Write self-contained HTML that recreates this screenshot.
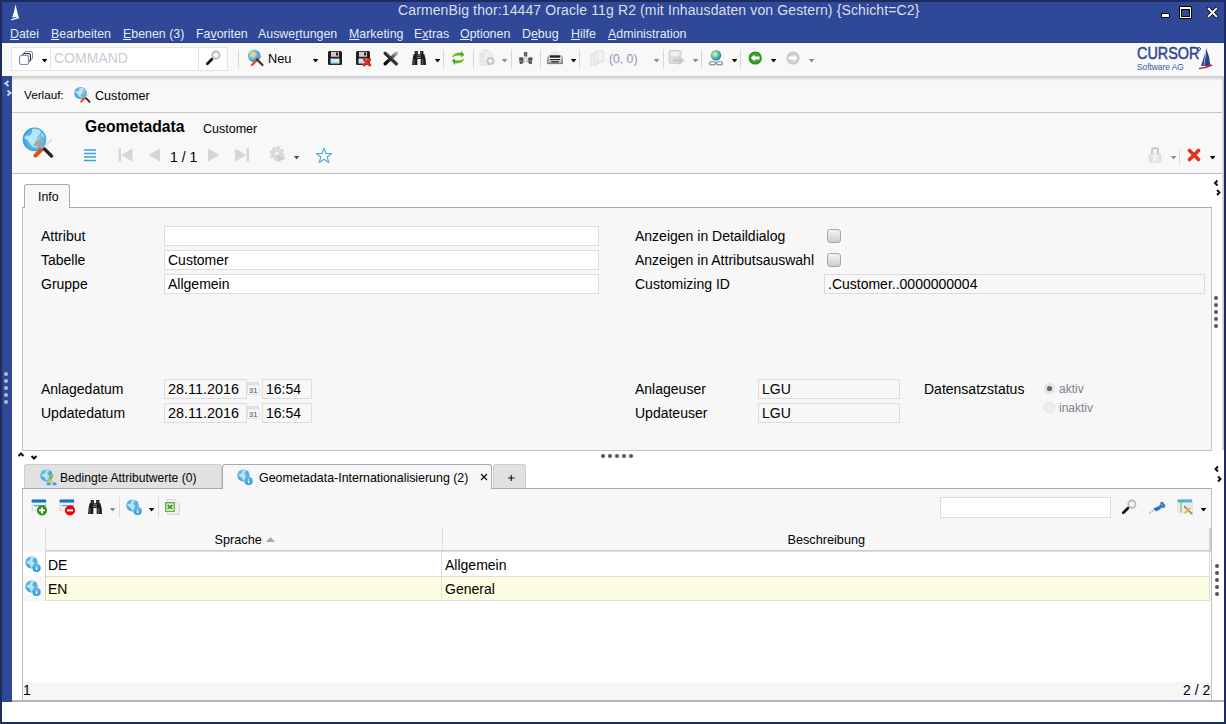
<!DOCTYPE html>
<html><head><meta charset="utf-8">
<style>
html,body{margin:0;padding:0;}
body{width:1226px;height:724px;overflow:hidden;position:relative;background:#1f2b5e;font-family:"Liberation Sans",sans-serif;color:#000;}
.a{position:absolute;}
.t{position:absolute;white-space:nowrap;line-height:16px;font-size:14px;}
.menu{position:absolute;top:27px;font-size:12.4px;line-height:14px;color:#e6eaf3;white-space:nowrap;}
.menu u{text-decoration:underline;text-underline-offset:1px;text-decoration-thickness:1px;}
.sep{position:absolute;top:47px;width:1px;height:24px;background:linear-gradient(rgba(215,215,215,0),#d6d6d6 25%,#d6d6d6 75%,rgba(215,215,215,0));}
.arr{position:absolute;width:6px;height:3.6px;background:#000;clip-path:polygon(0 0,100% 0,50% 100%);transform:translate(-0.4px,-0.2px);}
.arr.g{background:#8a8a8a;}
.fld{position:absolute;box-sizing:border-box;border:1px solid #dcdcdc;background:#fff;height:20px;}
.fld.ro{background:#f7f7f7;}
.lbl{position:absolute;white-space:nowrap;font-size:14px;line-height:16px;}
.dot{position:absolute;width:4px;height:4px;border-radius:50%;background:#555;}
.ldot{position:absolute;width:4px;height:4px;border-radius:50%;background:#b4bcd8;}
.cb{position:absolute;box-sizing:border-box;width:14px;height:14px;border:1px solid #a9a9a9;border-radius:3px;background:linear-gradient(#f4f4f4,#cdcdcd);}
</style></head><body>

<svg width="0" height="0" style="position:absolute">
<defs>
<radialGradient id="globeG" cx="0.45" cy="0.45" r="0.6"><stop offset="0" stop-color="#8fd2f0"/><stop offset="0.7" stop-color="#44a7de"/><stop offset="1" stop-color="#2a8ccc"/></radialGradient>
<radialGradient id="infoG" cx="0.5" cy="0.35" r="0.65"><stop offset="0" stop-color="#6cc2ec"/><stop offset="1" stop-color="#2592d4"/></radialGradient>
<symbol id="globeInfo" viewBox="0 0 18 18">
<circle cx="6.5" cy="6.5" r="6.1" fill="url(#globeG)"/>
<path d="M5.5 1.2 Q8 0.8 9.5 2 Q8.5 3.5 7.2 3.6 Q6.8 5 8 6 Q9.5 6.5 9 8.5 Q8 10.5 6.5 12.2 Q5 11 5.2 9.3 Q4.6 8 3 7.5 Q1.5 7.4 1.2 6 Q2.5 4.5 4 5 Q5.5 4 5.5 1.2Z" fill="#c8ecfa" opacity="0.8"/>
<path d="M10.5 4 Q12 5 12 7 Q11 6.5 10.5 4Z" fill="#c8ecfa" opacity="0.6"/>
<circle cx="11.6" cy="12" r="4.4" fill="#f4fbff" opacity="0.5"/>
<circle cx="11.6" cy="12" r="4.1" fill="url(#infoG)"/>
<rect x="11" y="11.8" width="1.2" height="2.4" fill="#fff"/><rect x="11" y="10.3" width="1.2" height="0.9" fill="#fff" opacity="0.8"/>
</symbol>
<symbol id="binoc" viewBox="0 0 16 15">
<linearGradient id="binG" x1="0" y1="0" x2="1" y2="0"><stop offset="0" stop-color="#111"/><stop offset="0.35" stop-color="#555"/><stop offset="0.6" stop-color="#222"/><stop offset="1" stop-color="#111"/></linearGradient>
<rect x="2.6" y="0" width="3.3" height="4" fill="#1a1a1a"/><rect x="8.1" y="0" width="3.3" height="4" fill="#1a1a1a"/>
<rect x="3.6" y="0.3" width="1" height="3" fill="#555"/><rect x="9.1" y="0.3" width="1" height="3" fill="#555"/>
<path d="M1.6 3.2 H12.4 L13.6 8 H0.6Z" fill="#1c1c1c"/>
<rect x="5" y="4" width="4" height="1" fill="#666"/><rect x="5" y="5.8" width="4" height="1.2" fill="#888"/>
<path d="M0.6 8 H5.3 V14 H0 Z" fill="url(#binG)"/><path d="M8.7 8 H13.6 L14 14 H8.7Z" fill="url(#binG)"/>
</symbol>
<symbol id="xls" viewBox="0 0 16 16">
<path d="M2.2 0.5 H10.5 L14.4 4.4 V15.4 H2.2Z" fill="#f0f0f0" stroke="#cfcfcf" stroke-width="0.8"/>
<path d="M10.5 0.5 V4.4 H14.4" fill="#fafafa" stroke="#d8d8d8" stroke-width="0.6"/>
<rect x="0" y="3" width="10" height="10" rx="0.8" fill="#6aac4a"/>
<rect x="1.4" y="4.4" width="7.2" height="7.2" fill="#eef6e8"/>
<path d="M2.6 6 L7.4 10 M7.4 6 L2.6 10" stroke="#3f9d28" stroke-width="1.8"/>
<rect x="1.6" y="10.4" width="6.8" height="0.8" fill="#fff"/>
</symbol>
<symbol id="mag" viewBox="0 0 18 18">
<radialGradient id="magG" cx="0.5" cy="0.55" r="0.5"><stop offset="0" stop-color="#ffffff"/><stop offset="0.7" stop-color="#e6e8ee"/><stop offset="1" stop-color="#c9cdd8"/></radialGradient>
<circle cx="11.9" cy="5.1" r="3.8" fill="url(#magG)" stroke="#b4b4b4" stroke-width="1.5"/>
<path d="M9.4 7.6 L8 9" stroke="#b8b8b8" stroke-width="1.6"/>
<path d="M7.8 9.2 L3.3 13.7" stroke="#111" stroke-width="2.7" stroke-linecap="round"/>
</symbol>
<symbol id="geoTools" viewBox="0 0 36 36"><defs><radialGradient id="gH" cx="0.55" cy="0.5" r="0.6"><stop offset="0" stop-color="#9fd8f2"/><stop offset="0.75" stop-color="#49aadf"/><stop offset="1" stop-color="#2f90cf"/></radialGradient></defs><circle cx="14.5" cy="15.4" r="11.8" fill="url(#gH)"/><path d="M12 5 Q16 4 20 6 Q22 9 19 11 Q17 12 16 15 Q14 19 17 21 Q19 23 15 24 Q11 22 9 18 Q7 15 4 14 Q6 10 9 12 Q12 11 12 7Z" fill="#c4ebfa" opacity="0.85"/><path d="M22 9 Q25 11 24 14 Q22 13 21 11Z" fill="#c4ebfa" opacity="0.7"/><path d="M31.5 15.5 L23 25" stroke="#d8d8d8" stroke-width="1.6" stroke-linecap="round"/><path d="M15.5 31.5 L22 25" stroke="#e5500f" stroke-width="4" stroke-linecap="round"/><path d="M24.5 25 L31.5 32" stroke="#252525" stroke-width="3.4" stroke-linecap="round"/><path d="M13.5 21 Q15 17 19 16 Q23 15.5 25 16 Q21 17.5 20.5 19 L23.5 23.5 L21.5 25 L18 21 Q16 21.5 15 23Z" fill="#a4a4a4"/></symbol>
</defs></svg>
<!-- title + menu bar -->
<div class="a" style="left:2px;top:2px;width:1222px;height:41px;background:#2f4898;"></div>
<div class="a" style="left:2px;top:42px;width:1222px;height:1px;background:#27408c;"></div>
<svg class="a" style="left:10px;top:4px" width="10" height="17" viewBox="0 0 10 17"><path d="M5.5 0.5 L8.5 13 L3 13 Z" fill="#fff"/><path d="M4 8 L2 13.5 L4.5 13.5Z" fill="#e8eaf4"/><path d="M1 16 Q5 14.5 9 13.5" stroke="#fff" stroke-width="1.3" fill="none"/></svg>
<div class="t" style="left:398px;top:2px;font-size:14px;letter-spacing:0.12px;color:#dcdfe8;">CarmenBig thor:14447 Oracle 11g R2 (mit Inhausdaten von Gestern) {Schicht=C2}</div>
<!-- window buttons -->
<div class="a" style="left:1161px;top:13px;width:9px;height:5px;background:#fff;border:1px solid #000;box-sizing:border-box;border-radius:1px;"></div>
<div class="a" style="left:1179px;top:6px;width:13px;height:13px;background:#000;border-radius:1px;"></div>
<div class="a" style="left:1180px;top:7px;width:11px;height:11px;background:#fff;"></div>
<div class="a" style="left:1181px;top:9px;width:9px;height:8px;background:#000;"></div>
<div class="a" style="left:1182px;top:10px;width:7px;height:6px;background:#2f4898;"></div>
<svg class="a" style="left:1206px;top:6px" width="13" height="13" viewBox="0 0 13 13"><path d="M2.5 2.5 L10.5 10.5 M10.5 2.5 L2.5 10.5" stroke="#000" stroke-width="3.4" stroke-linecap="round"/><path d="M2.5 2.5 L10.5 10.5 M10.5 2.5 L2.5 10.5" stroke="#fff" stroke-width="1.9" stroke-linecap="round"/></svg>

<div class="menu" style="left:10px"><u>D</u>atei</div>
<div class="menu" style="left:51px"><u>B</u>earbeiten</div>
<div class="menu" style="left:123px"><u>E</u>benen (3)</div>
<div class="menu" style="left:196px">Fa<u>v</u>oriten</div>
<div class="menu" style="left:258px">Auswe<u>r</u>tungen</div>
<div class="menu" style="left:349px"><u>M</u>arketing</div>
<div class="menu" style="left:414px">E<u>x</u>tras</div>
<div class="menu" style="left:460px"><u>O</u>ptionen</div>
<div class="menu" style="left:522px">D<u>e</u>bug</div>
<div class="menu" style="left:571px"><u>H</u>ilfe</div>
<div class="menu" style="left:608px"><u>A</u>dministration</div>

<!-- toolbar -->
<div class="a" style="left:2px;top:43px;width:1222px;height:33px;background:#f8f8f8;"></div>
<div class="a" style="left:12px;top:76px;width:1212px;height:5px;background:linear-gradient(#c4c4c4,#f8f8f8);"></div>

<!-- command box -->
<div class="a" style="left:11px;top:47px;width:217px;height:24px;box-sizing:border-box;border:1px solid #e3e3e3;background:#fff;"></div>
<div class="a" style="left:50px;top:48px;width:1px;height:22px;background:#e3e3e3;"></div>
<div class="a" style="left:198px;top:48px;width:1px;height:22px;background:#e3e3e3;"></div>
<svg class="a" style="left:18px;top:50px" width="17" height="16" viewBox="0 0 17 16"><rect x="6.5" y="1.5" width="8" height="8" rx="1.5" fill="none" stroke="#6f95c4"/><rect x="4.5" y="3.5" width="8" height="8" rx="1.5" fill="#ddd" stroke="#333"/><rect x="1.5" y="5.5" width="9" height="9" rx="1.8" fill="#fff" stroke="#6f95c4" stroke-width="1.2"/></svg>
<div class="arr" style="left:42px;top:59px;"></div>
<div class="t" style="left:54px;top:50px;font-size:14px;color:#c9cbd3;">COMMAND</div>
<svg class="a" style="left:204px;top:50px" width="18" height="18" viewBox="0 0 18 18"><use href="#mag"/></svg>
<div class="sep" style="left:238px"></div>

<!-- Neu -->
<svg class="a" style="left:247px;top:49px" width="18" height="18" viewBox="0 0 18 18"><defs><radialGradient id="gN" cx="0.4" cy="0.38" r="0.62"><stop offset="0" stop-color="#f4dc70"/><stop offset="0.25" stop-color="#e8d884"/><stop offset="0.45" stop-color="#7cc6e8"/><stop offset="0.8" stop-color="#3aa0dc"/><stop offset="1" stop-color="#2a86c6"/></radialGradient></defs><circle cx="7.2" cy="7" r="6.2" fill="url(#gN)"/><path d="M5 16 L10 11" stroke="#e2521e" stroke-width="2.4" stroke-linecap="round"/><path d="M15.5 16 L9.5 10" stroke="#333" stroke-width="2.2" stroke-linecap="round"/><path d="M8 9.5 L12 7 L14 8" stroke="#999" stroke-width="1.6" fill="none"/></svg>
<div class="t" style="left:268px;top:51px;font-size:12.8px;">Neu</div>
<div class="arr" style="left:313px;top:59px;"></div>

<!-- save -->
<svg class="a" style="left:328px;top:51px" width="14" height="14" viewBox="0 0 14 14"><rect x="0" y="0" width="14" height="14" rx="1.5" fill="#1d1d1d"/><rect x="3" y="0.8" width="8" height="5" fill="#c9c9c9"/><rect x="8" y="1.5" width="2" height="3" fill="#222"/><rect x="2.5" y="7.5" width="9" height="5" fill="#e2e2e2"/><rect x="2.5" y="11.8" width="9" height="1.3" fill="#35a6dd"/></svg>
<svg class="a" style="left:356px;top:51px" width="16" height="16" viewBox="0 0 16 16"><rect x="0" y="0" width="14" height="14" rx="1.5" fill="#1d1d1d"/><rect x="3" y="0.8" width="8" height="5" fill="#c9c9c9"/><rect x="8" y="1.5" width="2" height="3" fill="#222"/><rect x="2.5" y="7.5" width="9" height="5" fill="#e2e2e2"/><rect x="2.5" y="11.8" width="9" height="1.3" fill="#35a6dd"/><path d="M8.3 8.6 L13.7 14 M13.7 8.6 L8.3 14" stroke="#e8261a" stroke-width="2.9" stroke-linecap="round"/></svg>
<svg class="a" style="left:383px;top:51px" width="16" height="15" viewBox="0 0 16 15"><defs><linearGradient id="gX" x1="0" y1="1" x2="1" y2="0"><stop offset="0" stop-color="#000"/><stop offset="0.5" stop-color="#333"/><stop offset="1" stop-color="#aaa"/></linearGradient></defs><path d="M2.2 2.2 L13.3 12.8 M13.3 2.2 L2.2 12.8" stroke="url(#gX)" stroke-width="3.3" stroke-linecap="round"/></svg>
<!-- binoculars -->
<svg class="a" style="left:412px;top:51px" width="16" height="15" viewBox="0 0 16 15"><use href="#binoc"/></svg>
<div class="arr" style="left:435px;top:59px;"></div>
<div class="sep" style="left:443px"></div>
<!-- refresh -->
<svg class="a" style="left:451px;top:50px" width="15" height="16" viewBox="0 0 15 16"><defs><linearGradient id="rfA" x1="0" y1="0" x2="1" y2="0"><stop offset="0" stop-color="#8cc424"/><stop offset="1" stop-color="#3aa52a"/></linearGradient><linearGradient id="rfB" x1="0" y1="0" x2="1" y2="0"><stop offset="0" stop-color="#34a02a"/><stop offset="1" stop-color="#92c81e"/></linearGradient></defs><path d="M1 8 Q1.5 3.2 7.5 2.8 L10.2 2.8 L10.2 0.8 L13.2 4.9 L10.2 7.4 L10.2 5.6 L7 5.6 Q3 5.8 1 8Z" fill="url(#rfA)"/><path d="M13.2 8.2 Q12.7 12.8 6.7 13.2 L4 13.2 L4 15.2 L1 10.6 L4 8.6 L4 10.4 L7.2 10.4 Q11.2 10.3 13.2 8.2Z" fill="url(#rfB)"/></svg>
<div class="sep" style="left:473px"></div>
<!-- new doc gray -->
<svg class="a" style="left:479px;top:50px" width="17" height="16" viewBox="0 0 17 16"><path d="M1 3 h6 l3 3 v9 h-9z" fill="#ececec" stroke="#dcdcdc"/><path d="M4 0.5 h6 l3 3 v8 h-9z" fill="#efefef" stroke="#dcdcdc"/><circle cx="11.5" cy="11" r="4" fill="#c4c4c4"/><path d="M11.5 8.8 v4.4 M9.3 11 h4.4" stroke="#fff" stroke-width="1.3"/></svg>
<div class="arr g" style="left:502px;top:59px;"></div>
<div class="sep" style="left:511px"></div>
<!-- share -->
<svg class="a" style="left:518px;top:51px" width="16" height="14" viewBox="0 0 16 14"><defs><linearGradient id="shG" x1="0" y1="0" x2="1" y2="0"><stop offset="0" stop-color="#333"/><stop offset="0.5" stop-color="#777"/><stop offset="1" stop-color="#444"/></linearGradient></defs><rect x="6" y="1" width="3.2" height="4.5" rx="0.6" fill="url(#shG)"/><path d="M1 6.6 L4.6 6.2 L7 10 L3.6 13.2 L1.8 12.8 Z" fill="#505050"/><path d="M14.6 6.6 L11 6.2 L8.6 10 L12 13.2 L13.8 12.8 Z" fill="#505050"/><path d="M2 9.5 L4 11" stroke="#9a9a9a" stroke-width="1"/><path d="M13.6 9.5 L11.6 11" stroke="#9a9a9a" stroke-width="1"/><path d="M7.8 5.6 L4.8 10.2 L10.8 10.2 Z" fill="#f2f2f2" stroke="#c9b48a" stroke-width="0.8"/></svg>
<div class="sep" style="left:540px"></div>
<!-- printer -->
<svg class="a" style="left:546px;top:51px" width="18" height="14" viewBox="0 0 18 14"><defs><linearGradient id="prG" x1="0" y1="0" x2="1" y2="0"><stop offset="0" stop-color="#8a8a8a"/><stop offset="0.2" stop-color="#c4c4c4"/><stop offset="0.8" stop-color="#c4c4c4"/><stop offset="1" stop-color="#8a8a8a"/></linearGradient></defs><rect x="5" y="0.3" width="8" height="5" fill="#ebebeb"/><path d="M3 4 H15 L17 7 V12 Q17 13 16 13 H2 Q1 13 1 12 V7 Z" fill="url(#prG)"/><rect x="4" y="4.4" width="10" height="2.2" fill="#222"/><rect x="2" y="7" width="14" height="0.9" fill="#f2f2f2"/><rect x="4" y="8" width="10" height="1.3" fill="#2a2a2a"/><rect x="3" y="9.4" width="12" height="0.7" fill="#e8e8e8"/><rect x="5" y="10.2" width="8" height="1.3" rx="0.6" fill="#1a1a1a"/><rect x="1.5" y="12.2" width="15" height="0.9" fill="#6e6e6e"/></svg>
<div class="arr" style="left:571px;top:59px;"></div>
<div class="sep" style="left:579px"></div>
<!-- copies gray -->
<svg class="a" style="left:590px;top:50px" width="15" height="16" viewBox="0 0 15 16"><path d="M1 4 h5 l1 1 v10 h-6z" fill="#f0f0f0" stroke="#dedede"/><path d="M4 2 h5 l1 1 v10 h-6z" fill="#f0f0f0" stroke="#dedede"/><path d="M7 0.5 h5 l1.5 1.5 v10 h-6.5z" fill="#f2f2f2" stroke="#dedede"/></svg>
<div class="t" style="left:609px;top:51px;font-size:12.2px;color:#8a92b0;">(0, 0)</div>
<div class="arr g" style="left:654px;top:59px;"></div>
<div class="sep" style="left:663px"></div>
<!-- export gray -->
<svg class="a" style="left:668px;top:50px" width="18" height="16" viewBox="0 0 18 16"><rect x="1" y="0.5" width="12" height="13" rx="1.5" fill="#ddd" stroke="#cfcfcf"/><rect x="3" y="2" width="8" height="4" fill="#eee"/><path d="M5 9 h6 v-3 l5.5 4.5 l-5.5 4.5 v-3 h-6z" fill="#c8c8c8"/></svg>
<div class="arr g" style="left:693px;top:59px;"></div>
<div class="sep" style="left:701px"></div>
<!-- globe link -->
<svg class="a" style="left:708px;top:50px" width="16" height="16" viewBox="0 0 16 16"><defs><radialGradient id="gG" cx="0.4" cy="0.4" r="0.65"><stop offset="0" stop-color="#d8f0ff"/><stop offset="0.45" stop-color="#7fd06a"/><stop offset="0.7" stop-color="#3a9be0"/><stop offset="1" stop-color="#1d6fc0"/></radialGradient></defs><circle cx="8" cy="5.2" r="5.2" fill="url(#gG)"/><ellipse cx="4.5" cy="13.2" rx="3" ry="1.6" fill="none" stroke="#9a9a9a" stroke-width="1.4"/><ellipse cx="11.5" cy="13.2" rx="3" ry="1.6" fill="none" stroke="#9a9a9a" stroke-width="1.4"/></svg>
<div class="arr" style="left:732px;top:59px;"></div>
<div class="sep" style="left:740px"></div>
<!-- back green -->
<svg class="a" style="left:748px;top:51px" width="15" height="14" viewBox="0 0 15 14"><circle cx="7.2" cy="7" r="6.6" fill="#2f8a22"/><circle cx="7.2" cy="7" r="5.3" fill="#3f9e2f"/><path d="M2.8 7 L6.5 3.5 V5.6 H11.5 V8.4 H6.5 V10.5 Z" fill="#fff"/></svg>
<div class="arr" style="left:771px;top:59px;"></div>
<!-- forward gray -->
<svg class="a" style="left:786px;top:51px" width="15" height="14" viewBox="0 0 15 14"><circle cx="7" cy="7" r="6.6" fill="#c6c6c6"/><circle cx="7" cy="7" r="5.3" fill="#d0d0d0"/><path d="M11.4 7 L7.7 3.5 V5.6 H2.7 V8.4 H7.7 V10.5 Z" fill="#fff"/></svg>
<div class="arr g" style="left:809px;top:59px;"></div>

<!-- logo -->
<div class="t" style="left:1137px;top:45px;font-size:16px;line-height:18px;font-weight:normal;-webkit-text-stroke:0.45px #2a4490;color:#2a4490;transform:scaleX(0.9);transform-origin:0 0;">CURSOR</div>
<div class="a" style="left:1197px;top:47px;width:4px;height:4px;border:1px solid #2a4490;border-radius:50%;box-sizing:border-box;"></div>
<div class="t" style="left:1137px;top:61px;font-size:9.4px;line-height:11px;color:#3d559e;transform:scaleX(0.89);transform-origin:0 0;">Software AG</div>
<svg class="a" style="left:1198px;top:47px" width="15" height="23" viewBox="0 0 15 23"><path d="M8 1 Q12 10 12.5 19 L6 19 Q8 10 8 1Z" fill="#2a4490"/><path d="M7 6 Q5 13 3 19 L5.5 19 Q7 12 7 6Z" fill="#2a4490"/><path d="M1 21.5 Q8 21 14 18" stroke="#d01e3c" stroke-width="1.5" fill="none"/></svg>

<!-- left strip -->
<div class="a" style="left:2px;top:76px;width:10px;height:626px;background:#2f4898;"></div>

<!-- main white -->
<div class="a" style="left:12px;top:76px;width:1212px;height:626px;background:#fff;"></div>
<div class="a" style="left:1222px;top:76px;width:2px;height:374px;background:linear-gradient(90deg,#e4e4e4,#c4c4c4);"></div>
<!-- Verlauf bar -->
<div class="a" style="left:12px;top:76px;width:1210px;height:36px;background:#f8f8f8;border-bottom:1px solid #c6c6c6;"></div>
<div class="a" style="left:12px;top:76px;width:1210px;height:5px;background:linear-gradient(#c8c8c8,rgba(248,248,248,0));"></div>
<div class="t" style="left:24px;top:88px;font-size:11.7px;line-height:13px;">Verlauf:</div>
<svg class="a" style="left:73px;top:85px" width="19" height="19" viewBox="0 0 36 36"><use href="#geoTools"/></svg>
<div class="t" style="left:95px;top:88px;font-size:12.6px;">Customer</div>

<!-- Header -->
<div class="a" style="left:12px;top:113px;width:1210px;height:60px;background:#f8f8f8;border-bottom:1px solid #bdbdbd;"></div>
<svg class="a" style="left:20px;top:124px" width="36" height="36" viewBox="0 0 36 36"><use href="#geoTools"/></svg>
<div class="t" style="left:85px;top:118px;font-size:15.7px;line-height:18px;font-weight:bold;">Geometadata</div>
<div class="t" style="left:203px;top:121px;font-size:12.5px;">Customer</div>
<svg class="a" style="left:83px;top:148px" width="15" height="14" viewBox="0 0 15 14"><path d="M1 2 h12 M1 5.5 h12 M1 9 h12 M1 12.5 h12" stroke="#3aa3d8" stroke-width="1.3"/></svg>
<svg class="a" style="left:118px;top:148px" width="16" height="14" viewBox="0 0 16 14"><rect x="0.5" y="0.5" width="2.5" height="13" fill="#d6d6d6"/><path d="M3 7 L14.5 0.5 V13.5Z" fill="#d6d6d6"/></svg>
<svg class="a" style="left:148px;top:148px" width="13" height="14" viewBox="0 0 13 14"><path d="M0.5 7 L12 0.5 V13.5Z" fill="#d6d6d6"/></svg>
<div class="t" style="left:170px;top:149px;font-size:14px;">1 / 1</div>
<svg class="a" style="left:207px;top:148px" width="13" height="14" viewBox="0 0 13 14"><path d="M12.5 7 L1 0.5 V13.5Z" fill="#d6d6d6"/></svg>
<svg class="a" style="left:234px;top:148px" width="16" height="14" viewBox="0 0 16 14"><rect x="12.5" y="0.5" width="2.5" height="13" fill="#d6d6d6"/><path d="M12.5 7 L1 0.5 V13.5Z" fill="#d6d6d6"/></svg>
<svg class="a" style="left:270px;top:146px" width="18" height="18" viewBox="0 0 18 18"><path d="M12.20 7.50 L13.95 8.32 L13.47 10.18 L11.54 10.04 L10.68 11.18 L11.33 13.00 L9.68 13.97 L8.41 12.50 L7.00 12.70 L6.18 14.45 L4.32 13.97 L4.46 12.04 L3.32 11.18 L1.50 11.83 L0.53 10.18 L2.00 8.91 L1.80 7.50 L0.05 6.68 L0.53 4.82 L2.46 4.96 L3.32 3.82 L2.67 2.00 L4.32 1.03 L5.59 2.50 L7.00 2.30 L7.82 0.55 L9.68 1.03 L9.54 2.96 L10.68 3.82 L12.50 3.17 L13.47 4.82 L12.00 6.09Z" fill="#dcdcdc" stroke="#c8c8c8" stroke-width="0.7" stroke-linejoin="round"/><circle cx="7" cy="7.5" r="1.6" fill="#fafafa"/><path d="M7.2 8.3 L7.2 16.5 L15.8 12.3Z" fill="#cfcfcf"/></svg>
<div class="arr" style="left:294px;top:156px;background:#555;"></div>
<svg class="a" style="left:315px;top:147px" width="18" height="17" viewBox="0 0 18 17"><path d="M9 1.2 L11 6.5 L16.6 6.6 L12.2 10 L13.8 15.5 L9 12.3 L4.2 15.5 L5.8 10 L1.4 6.6 L7 6.5 Z" fill="none" stroke="#4aa8dc" stroke-width="1.05" stroke-linejoin="round"/></svg>
<svg class="a" style="left:1148px;top:147px" width="14" height="17" viewBox="0 0 14 17"><defs><linearGradient id="lkG" x1="0" y1="0" x2="1" y2="0"><stop offset="0" stop-color="#d8d8d8"/><stop offset="0.45" stop-color="#f4f4f4"/><stop offset="1" stop-color="#dedede"/></linearGradient></defs><path d="M4 7.2 V3.2 Q4 1.2 6 1.2 H8 Q10 1.2 10 3.2 V7.2" fill="none" stroke="#c6c6c6" stroke-width="1.9"/><rect x="1.2" y="7" width="11.6" height="8.1" rx="1.3" fill="url(#lkG)" stroke="#d2d2d2" stroke-width="0.6"/></svg>
<div class="arr g" style="left:1171px;top:156px;"></div>
<div class="a" style="left:1179px;top:146px;width:1px;height:21px;background:linear-gradient(rgba(220,220,220,0),#d8d8d8 30%,#d8d8d8 70%,rgba(220,220,220,0));"></div>
<svg class="a" style="left:1187px;top:148px" width="14" height="14" viewBox="0 0 14 14"><path d="M2.5 2.5 L11.5 11.5 M11.5 2.5 L2.5 11.5" stroke="#e6301c" stroke-width="3.6" stroke-linecap="round"/></svg>
<div class="arr" style="left:1210px;top:156px;"></div>

<!-- side handle arrows right -->
<svg class="a" style="left:1213px;top:179px" width="9" height="18" viewBox="0 0 9 18"><path d="M4.5 1.5 L2 4 L4.5 6.5" stroke="#111" stroke-width="2" fill="none"/><path d="M4 11 L6.5 13.5 L4 16" stroke="#111" stroke-width="2" fill="none"/></svg>
<!-- left strip arrows -->
<svg class="a" style="left:2px;top:78px" width="10" height="20" viewBox="0 0 10 20"><path d="M6.5 3 L3.5 5.5 L6.5 8" stroke="#d2d6df" stroke-width="2" fill="none"/><path d="M5.5 12.5 L8.5 15 L5.5 17.5" stroke="#d2d6df" stroke-width="2" fill="none"/></svg>

<!-- Info tab + panel -->
<div class="a" style="left:22px;top:207px;width:1190px;height:244px;box-sizing:border-box;background:#f7f7f7;border:1px solid #c2c2c2;border-top-color:#a3abbb;"></div>
<div class="a" style="left:24px;top:184px;width:46px;height:24px;box-sizing:border-box;background:#f7f7f7;border:1px solid #a3abbb;border-bottom:none;border-radius:3px 3px 0 0;"></div>
<div class="t" style="left:38px;top:189px;font-size:12.3px;">Info</div>

<div class="lbl" style="left:41px;top:228px;">Attribut</div>
<div class="lbl" style="left:41px;top:252px;">Tabelle</div>
<div class="lbl" style="left:41px;top:276px;">Gruppe</div>
<div class="fld" style="left:164px;top:226px;width:435px;"></div>
<div class="fld" style="left:164px;top:250px;width:435px;"><div class="t" style="left:3px;top:1px;">Customer</div></div>
<div class="fld" style="left:164px;top:274px;width:435px;"><div class="t" style="left:3px;top:1px;">Allgemein</div></div>

<div class="lbl" style="left:635px;top:228px;">Anzeigen in Detaildialog</div>
<div class="lbl" style="left:635px;top:252px;">Anzeigen in Attributsauswahl</div>
<div class="lbl" style="left:635px;top:276px;">Customizing ID</div>
<div class="cb" style="left:827px;top:229px;"></div>
<div class="cb" style="left:827px;top:253px;"></div>
<div class="fld ro" style="left:824px;top:274px;width:381px;"><div class="t" style="left:3px;top:1px;">.Customer..0000000004</div></div>

<div class="lbl" style="left:41px;top:381px;">Anlagedatum</div>
<div class="lbl" style="left:41px;top:405px;">Updatedatum</div>
<div class="fld ro" style="left:164px;top:379px;width:83px;"><div class="t" style="left:3px;top:1px;font-size:14.4px;">28.11.2016</div></div>
<div class="fld ro" style="left:164px;top:403px;width:83px;"><div class="t" style="left:3px;top:1px;font-size:14.4px;">28.11.2016</div></div>
<svg class="a" style="left:247px;top:382px" width="13" height="13" viewBox="0 0 13 13"><rect x="0.5" y="0.5" width="11.5" height="12" rx="0.8" fill="#fbfbfb" stroke="#d8d8d8" stroke-width="0.8"/><rect x="0.6" y="0.6" width="11.3" height="3" fill="#e2e2e2"/><text x="6.3" y="11" font-size="7.6" font-weight="bold" font-family="Liberation Sans" text-anchor="middle" fill="#7a7a7a">31</text></svg>
<svg class="a" style="left:247px;top:406px" width="13" height="13" viewBox="0 0 13 13"><rect x="0.5" y="0.5" width="11.5" height="12" rx="0.8" fill="#fbfbfb" stroke="#d8d8d8" stroke-width="0.8"/><rect x="0.6" y="0.6" width="11.3" height="3" fill="#e2e2e2"/><text x="6.3" y="11" font-size="7.6" font-weight="bold" font-family="Liberation Sans" text-anchor="middle" fill="#7a7a7a">31</text></svg>
<div class="fld ro" style="left:262px;top:379px;width:50px;"><div class="t" style="left:3px;top:1px;">16:54</div></div>
<div class="fld ro" style="left:262px;top:403px;width:50px;"><div class="t" style="left:3px;top:1px;">16:54</div></div>

<div class="lbl" style="left:635px;top:381px;">Anlageuser</div>
<div class="lbl" style="left:635px;top:405px;">Updateuser</div>
<div class="fld ro" style="left:758px;top:379px;width:142px;"><div class="t" style="left:3px;top:1px;">LGU</div></div>
<div class="fld ro" style="left:758px;top:403px;width:142px;"><div class="t" style="left:3px;top:1px;">LGU</div></div>
<div class="lbl" style="left:924px;top:381px;">Datensatzstatus</div>
<svg class="a" style="left:1043px;top:382px" width="13" height="13" viewBox="0 0 13 13"><circle cx="6.5" cy="6.5" r="5.5" fill="#e4e4e4"/><circle cx="6.5" cy="6.5" r="2.6" fill="#6a6a6a"/></svg>
<svg class="a" style="left:1043px;top:401px" width="13" height="13" viewBox="0 0 13 13"><circle cx="6.5" cy="6.5" r="5.5" fill="#ececec" stroke="#e2e2e2" stroke-width="0.8"/></svg>
<div class="t" style="left:1059px;top:381px;font-size:12px;color:#7c8090;">aktiv</div>
<div class="t" style="left:1059px;top:400px;font-size:12px;color:#7c8090;">inaktiv</div>

<!-- panel right dots -->
<div class="dot" style="left:1214px;top:296px;"></div><div class="dot" style="left:1214px;top:303px;"></div><div class="dot" style="left:1214px;top:310px;"></div><div class="dot" style="left:1214px;top:317px;"></div><div class="dot" style="left:1214px;top:324px;"></div>
<!-- left strip dots -->
<div class="ldot" style="left:4px;top:372px;"></div><div class="ldot" style="left:4px;top:379px;"></div><div class="ldot" style="left:4px;top:386px;"></div><div class="ldot" style="left:4px;top:393px;"></div><div class="ldot" style="left:4px;top:400px;"></div>

<!-- splitter -->
<svg class="a" style="left:16px;top:451px" width="24" height="10" viewBox="0 0 24 10"><path d="M2.5 5 L5 2.5 L7.5 5" stroke="#111" stroke-width="2" fill="none"/><path d="M15.5 5 L18 7.5 L20.5 5" stroke="#111" stroke-width="2" fill="none"/></svg>
<div class="dot" style="left:601px;top:454px;"></div><div class="dot" style="left:608px;top:454px;"></div><div class="dot" style="left:615px;top:454px;"></div><div class="dot" style="left:622px;top:454px;"></div><div class="dot" style="left:629px;top:454px;"></div>
<svg class="a" style="left:1213px;top:464px" width="10" height="20" viewBox="0 0 10 20"><path d="M5 2.5 L2.5 5 L5 7.5" stroke="#111" stroke-width="2" fill="none"/><path d="M5 12.5 L7.5 15 L5 17.5" stroke="#111" stroke-width="2" fill="none"/></svg>

<!-- lower panel -->
<div class="a" style="left:22px;top:488px;width:1190px;height:212px;box-sizing:border-box;background:#fff;border:1px solid #c2c2c2;border-top-color:#a3abbb;border-bottom:none;"></div>
<div class="a" style="left:23px;top:489px;width:1188px;height:63px;background:#f7f7f7;"></div>
<!-- tabs -->
<div class="a" style="left:24px;top:464px;width:198px;height:24px;box-sizing:border-box;background:#e1e1e1;border:1px solid #cdcdcd;border-bottom:none;border-radius:3px 3px 0 0;"></div>
<div class="a" style="left:222px;top:464px;width:270px;height:25px;box-sizing:border-box;background:#f7f7f7;border:1px solid #a3abbb;border-bottom:none;border-radius:3px 3px 0 0;"></div>
<div class="a" style="left:493px;top:464px;width:33px;height:24px;box-sizing:border-box;background:#e1e1e1;border:1px solid #cdcdcd;border-bottom:none;border-radius:3px 3px 0 0;"></div>
<svg class="a" style="left:39.5px;top:468.5px" width="18" height="18" viewBox="0 0 18 18"><circle cx="6.5" cy="6.5" r="6.1" fill="url(#globeG)"/><path d="M5.5 1.2 Q8 0.8 9.5 2 Q8.5 3.5 7.2 3.6 Q6.8 5 8 6 Q9.5 6.5 9 8.5 Q8 10.5 6.5 12.2 Q5 11 5.2 9.3 Q4.6 8 3 7.5 Q1.5 7.4 1.2 6 Q2.5 4.5 4 5 Q5.5 4 5.5 1.2Z" fill="#c8ecfa" opacity="0.8"/><path d="M6 13 H14.2" stroke="#9a9a9a" stroke-width="0.5"/><rect x="9.4" y="5.9" width="4.1" height="2.5" rx="1" fill="#9cc82c"/><rect x="7.8" y="9.9" width="3.9" height="2.5" rx="1" fill="#f2b418"/><rect x="6.7" y="13.6" width="4" height="2.7" rx="0.8" fill="#32a6e2"/><rect x="12.5" y="13.6" width="3.9" height="2.7" rx="0.8" fill="#32a6e2"/></svg>
<div class="t" style="left:60px;top:470px;font-size:12.1px;">Bedingte Attributwerte (0)</div>
<svg class="a" style="left:237.4px;top:468.5px" width="18" height="18" viewBox="0 0 18 18"><use href="#globeInfo"/></svg>
<div class="t" style="left:259px;top:470px;font-size:12.4px;">Geometadata-Internationalisierung (2)</div>
<svg class="a" style="left:480px;top:473px" width="8" height="8" viewBox="0 0 8 8"><path d="M1 1 L7 7 M7 1 L1 7" stroke="#111" stroke-width="1.2"/></svg>
<svg class="a" style="left:507.5px;top:474.5px" width="7" height="6" viewBox="0 0 7 6"><path d="M0 3 H6.5 M3.25 0 V6" stroke="#111" stroke-width="1.15"/></svg>

<!-- lower toolbar -->
<svg class="a" style="left:31px;top:498.5px" width="18" height="18" viewBox="0 0 18 18"><rect x="0.6" y="0.6" width="14.6" height="11.6" rx="0.8" fill="#dadada"/><rect x="2" y="3.5" width="12" height="8" fill="#efefef"/><rect x="0.6" y="0.6" width="14.6" height="3" rx="0.8" fill="#1b6fc2"/><rect x="3" y="6" width="12" height="1.2" fill="#3cb0ec"/><circle cx="11" cy="11.4" r="5" fill="#2d8a1c"/><path d="M11 8.4 v6 M8 11.4 h6" stroke="#fff" stroke-width="1.9"/></svg>
<svg class="a" style="left:59px;top:498.5px" width="18" height="18" viewBox="0 0 18 18"><rect x="0.6" y="0.6" width="14.6" height="11.6" rx="0.8" fill="#dadada"/><rect x="2" y="3.5" width="12" height="8" fill="#efefef"/><rect x="0.6" y="0.6" width="14.6" height="3" rx="0.8" fill="#1b6fc2"/><rect x="3" y="6" width="12" height="1.2" fill="#3cb0ec"/><circle cx="11" cy="11.4" r="5" fill="#f20000"/><path d="M8 11.4 h6" stroke="#fff" stroke-width="1.9"/></svg>
<svg class="a" style="left:88px;top:500px" width="16" height="15" viewBox="0 0 16 15"><use href="#binoc"/></svg>
<div class="arr g" style="left:110px;top:508px;"></div>
<div class="a" style="left:119px;top:497px;width:1px;height:21px;background:#dedede;"></div>
<svg class="a" style="left:125.5px;top:498.5px" width="18" height="18" viewBox="0 0 18 18"><use href="#globeInfo"/></svg>
<div class="arr" style="left:149px;top:508px;"></div>
<div class="a" style="left:158px;top:497px;width:1px;height:21px;background:#dedede;"></div>
<svg class="a" style="left:165px;top:499px" width="16" height="16" viewBox="0 0 16 16"><use href="#xls"/></svg>

<div class="fld" style="left:940px;top:497px;width:171px;height:21px;"></div>
<svg class="a" style="left:1119.8px;top:499.3px" width="18" height="18" viewBox="0 0 18 18"><use href="#mag"/></svg>
<svg class="a" style="left:1147px;top:500px" width="20" height="16" viewBox="0 0 20 16"><path d="M2 13.5 L7 10" stroke="#999" stroke-width="1.1" stroke-dasharray="1 0.7"/><path d="M6.5 8.5 L9 11.5 L12 10 L15 7.5 L17.5 8 L18.5 5.5 L15.5 1.8 L13 2.5 L13.5 4.5 L10.5 7 Z" fill="#2f73d0"/><path d="M13 3 L17 6.5" stroke="#79aef0" stroke-width="1"/><path d="M7.5 9 L10.5 7.5" stroke="#1b4fa0" stroke-width="1"/></svg>
<svg class="a" style="left:1177px;top:499px" width="18" height="17" viewBox="0 0 18 17"><rect x="0.6" y="0.4" width="14.6" height="13" rx="1" fill="#eef0f2" stroke="#d6d6d6" stroke-width="0.6"/><rect x="0.6" y="0.4" width="14.6" height="3" rx="1" fill="#4fb0e2"/><rect x="3" y="3.4" width="2" height="9.8" fill="#9fd176"/><path d="M0.6 6.5 H15 M0.6 9.5 H15 M8 3.4 V13 M11.5 3.4 V13" stroke="#dcdcdc" stroke-width="0.6"/><path d="M8 8 L14.5 14.5" stroke="#8e8e8e" stroke-width="1.6"/><path d="M13.5 8.5 L7.5 14.5" stroke="#f0b41e" stroke-width="1.7"/><circle cx="8" cy="8" r="1.2" fill="#9a9a9a"/><circle cx="14.5" cy="14.5" r="1.2" fill="#9a9a9a"/></svg>
<div class="arr" style="left:1201px;top:508px;"></div>

<!-- table header -->
<div class="a" style="left:45px;top:528px;width:1px;height:22px;background:#dedede;"></div>
<div class="a" style="left:442px;top:528px;width:1px;height:22px;background:#dedede;"></div>
<div class="a" style="left:1209px;top:528px;width:2px;height:22px;background:linear-gradient(90deg,#e0e0e0,#c4c4c4);"></div>
<div class="a" style="left:45px;top:550px;width:1166px;height:2px;background:linear-gradient(#c4c4c4,#e4e4e4);"></div>
<div class="t" style="left:214.5px;top:532px;font-size:12.7px;">Sprache</div>
<svg class="a" style="left:265px;top:536px" width="11" height="7" viewBox="0 0 11 7"><path d="M1 6 L5.5 1 L10 6Z" fill="#a9a9a9"/></svg>
<div class="t" style="left:787.5px;top:532px;font-size:12.7px;">Beschreibung</div>

<!-- rows -->
<div class="a" style="left:23px;top:576px;width:22px;height:25px;background:#f7f7f7;"></div>
<div class="a" style="left:45px;top:552px;width:1165px;height:24px;background:#fff;border-bottom:1px solid #dcdcdc;"></div>
<div class="a" style="left:45px;top:577px;width:1165px;height:23px;background:#fdfde2;border-bottom:1px solid #dcdcdc;"></div>
<div class="a" style="left:45px;top:552px;width:1px;height:49px;background:#d4d4d4;"></div>
<div class="a" style="left:441px;top:552px;width:1px;height:49px;background:#dcdcdc;"></div>
<div class="a" style="left:1209px;top:552px;width:1px;height:49px;background:#dcdcdc;"></div>
<svg class="a" style="left:24.6px;top:555.8px" width="18" height="18" viewBox="0 0 18 18"><use href="#globeInfo"/></svg>
<svg class="a" style="left:24.6px;top:579.8px" width="18" height="18" viewBox="0 0 18 18"><use href="#globeInfo"/></svg>
<div class="t" style="left:48px;top:557px;">DE</div>
<div class="t" style="left:445px;top:557px;">Allgemein</div>
<div class="t" style="left:48px;top:581px;">EN</div>
<div class="t" style="left:445px;top:581px;">General</div>
<!-- right dots lower -->
<div class="dot" style="left:1215px;top:564px;"></div><div class="dot" style="left:1215px;top:571px;"></div><div class="dot" style="left:1215px;top:578px;"></div><div class="dot" style="left:1215px;top:585px;"></div><div class="dot" style="left:1215px;top:592px;"></div>

<!-- footer -->
<div class="a" style="left:23px;top:682px;width:1188px;height:18px;background:#f6f6f6;"></div>
<div class="t" style="left:23px;top:682px;font-size:14px;">1</div>
<div class="t" style="left:1183px;top:682px;font-size:14px;">2 / 2</div>
<div class="a" style="left:12px;top:700px;width:1212px;height:2px;background:#b0b5c4;"></div>
<div class="a" style="left:2px;top:702px;width:1222px;height:20px;background:#fff;"></div>


</body></html>
